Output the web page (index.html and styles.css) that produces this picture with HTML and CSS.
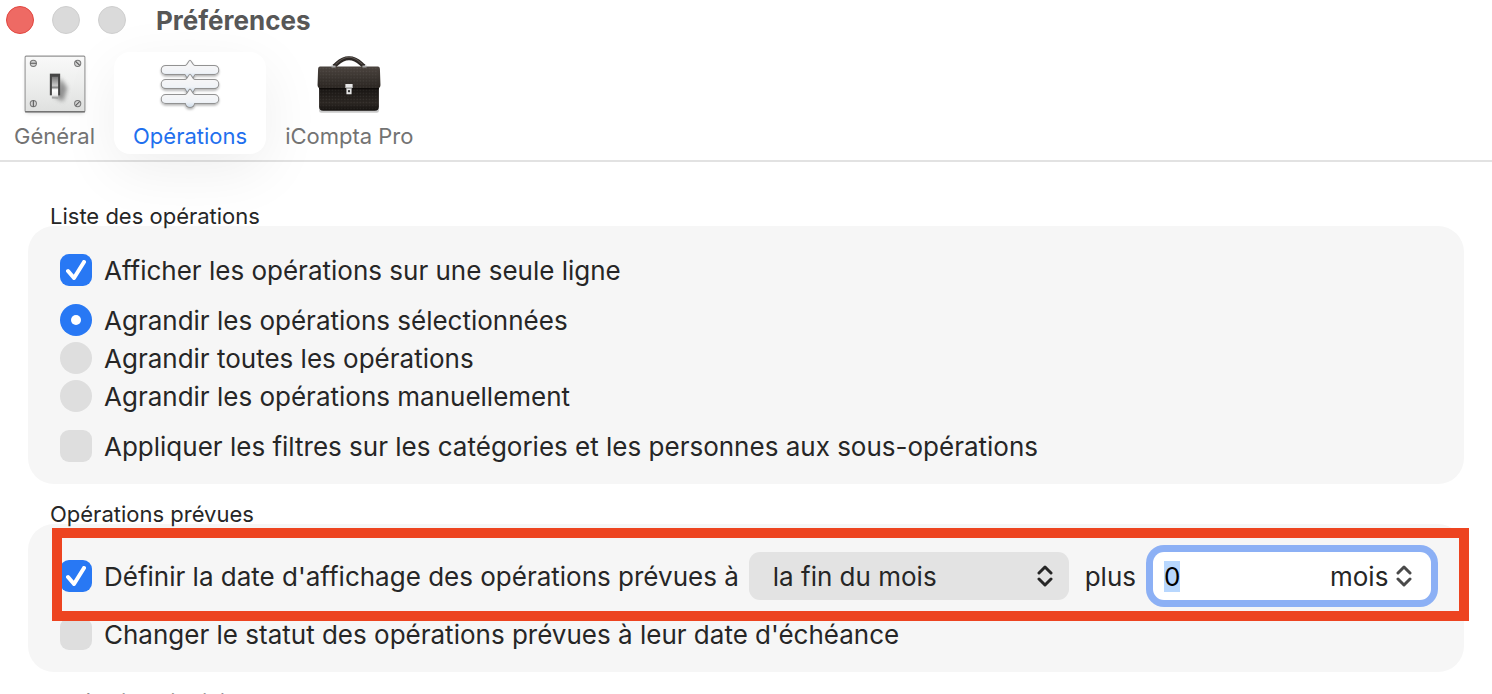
FILE: index.html
```html
<!DOCTYPE html>
<html lang="fr">
<head>
    <meta charset="UTF-8">
    <meta name="viewport" content="width=device-width, initial-scale=1.0">
    <title>Préférences</title>
    <link rel="stylesheet" href="styles.css">
</head>
<body>
    <header>
        <div class="titlebar">
            <button class="dot close" aria-label="Fermer"></button>
            <button class="dot" aria-label="Réduire" disabled></button>
            <button class="dot" aria-label="Agrandir" disabled></button>
            <h1>Préférences</h1>
        </div>
        <nav class="tabs">
            <button class="tab">
                <svg width="66" height="66" viewBox="0 0 64 64" aria-hidden="true">
                    <defs>
                        <linearGradient id="plate" x1="0" y1="0" x2="0" y2="1">
                            <stop offset="0" stop-color="#f9f9f9"/>
                            <stop offset="0.5" stop-color="#eeefee"/>
                            <stop offset="1" stop-color="#dfe0df"/>
                        </linearGradient>
                        <linearGradient id="lever" x1="0" y1="0" x2="0" y2="1">
                            <stop offset="0" stop-color="#777"/>
                            <stop offset="0.4" stop-color="#c8c8c8"/>
                            <stop offset="0.5" stop-color="#888"/>
                            <stop offset="0.6" stop-color="#fff"/>
                            <stop offset="0.85" stop-color="#eee"/>
                            <stop offset="1" stop-color="#888"/>
                        </linearGradient>
                        <filter id="soft" x="-50%" y="-50%" width="200%" height="200%">
                            <feGaussianBlur stdDeviation="2"/>
                        </filter>
                    </defs>
                    <rect x="4" y="8" width="56" height="51" fill="#999" opacity="0.5" filter="url(#soft)"/>
                    <rect x="3" y="4" width="58" height="54" rx="1" fill="url(#plate)" stroke="#929292"/>
                    <path d="M3 58h58" stroke="#747474" stroke-width="1.5"/>
                    <path d="M32 44l5-19 7 10-4 13z" fill="#555" opacity="0.6" filter="url(#soft)"/>
                    <rect x="27" y="21" width="10" height="21" fill="#454545"/>
                    <rect x="29" y="24" width="6" height="21" fill="url(#lever)"/>
                    <g fill="#d2d2d2" stroke="#777">
                        <circle cx="11" cy="11" r="3"/>
                        <circle cx="54" cy="11" r="3"/>
                        <circle cx="11" cy="50" r="3"/>
                        <circle cx="54" cy="50" r="3"/>
                    </g>
                    <path d="M8 11h6M52 9l4 4M11 47v6M52 52l4-4" stroke="#555" fill="none"/>
                </svg>
                Général
            </button>
            <button class="tab active">
                <svg width="66" height="66" viewBox="0 0 64 64" aria-hidden="true">
                    <defs>
                        <linearGradient id="bar" x1="0" y1="0" x2="0" y2="1">
                            <stop offset="0.3" stop-color="#f6f6f7"/>
                            <stop offset="0.7" stop-color="#f0f3f7"/>
                            <stop offset="1" stop-color="#ccdbea"/>
                        </linearGradient>
                        <filter id="drop" x="-10%" y="-20%" width="120%" height="160%">
                            <feDropShadow dx="0" dy="1.5" stdDeviation="1.2" flood-color="#000" flood-opacity="0.3"/>
                        </filter>
                    </defs>
                    <g fill="url(#bar)" stroke="#929292" filter="url(#drop)">
                        <path d="M8.500 13H27.500C29.500 13 30.500 8 32 8S34.500 13 36.500 13H55.500A4.400 4.400 0 0 1 55.500 21.800H37L35 25H29L27 21.800H8.500A4.400 4.400 0 0 1 8.500 13z"/>
                        <path d="M8.500 26.700H27.500C29.500 26.700 30.500 21.500 32 21.500S34.500 26.700 36.500 26.700H55.500A4.400 4.400 0 0 1 55.500 35.500H37L35 39H29L27 35.500H8.500A4.400 4.400 0 0 1 8.500 26.700z"/>
                        <path d="M8.500 41.200H27.500C29.500 41.200 30.500 36 32 36S34.500 41.200 36.500 41.200H55.500A4.400 4.400 0 0 1 55.500 50H36.500C35.500 55 28.500 55 27.500 50H8.500A4.400 4.400 0 0 1 8.500 41.200z"/>
                    </g>
                </svg>
                Opérations
            </button>
            <button class="tab">
                <svg width="66" height="66" viewBox="0 0 64 64" aria-hidden="true">
                    <defs>
                        <linearGradient id="flap" x1="0" y1="0" x2="0" y2="1">
                            <stop offset="0" stop-color="#4a433e"/>
                            <stop offset="1" stop-color="#2b2622"/>
                        </linearGradient>
                        <linearGradient id="bag" x1="0" y1="0" x2="0" y2="1">
                            <stop offset="0" stop-color="#14110f"/>
                            <stop offset="0.7" stop-color="#2b2622"/>
                            <stop offset="1" stop-color="#14110f"/>
                        </linearGradient>
                        <pattern id="grain" width="3" height="3" patternUnits="userSpaceOnUse">
                            <circle cx="1" cy="1" r="0.7" fill="#fff" opacity="0.07"/>
                        </pattern>
                    </defs>
                    <rect x="3" y="54" width="58" height="5" rx="2" fill="#777" opacity="0.4"/>
                    <path d="M17 14C21 12 23 6 32 6S43 12 47 14" fill="none" stroke="#2c2724" stroke-width="4"/>
                    <path d="M19 12C23 9 25 5 32 5S41 9 45 12" fill="none" stroke="#5d5651"/>
                    <path d="M3 32H61V53Q61 57 57 57H7Q3 57 3 53z" fill="url(#bag)"/>
                    <path d="M4 14H60Q62 14 62 17L62.500 32Q62.500 35 60 35H4Q1.500 35 1.500 32L2 17Q2 14 4 14z" fill="url(#flap)"/>
                    <path d="M4 15H60V56H4z" fill="url(#grain)"/>
                    <path d="M3 35.500H61" stroke="#0e0b09"/>
                    <path d="M15 13h4v2h-4zM45 13h4v2h-4z" fill="#aaa"/>
                    <path d="M28.500 31h7v4h-1v6h-5v-6h-1z" fill="#e6e6e6"/>
                    <path d="M29 35h6" stroke="#777"/>
                    <rect x="31" y="37" width="2" height="2" fill="#333"/>
                </svg>
                iCompta Pro
            </button>
        </nav>
    </header>

    <main>
        <section>
            <h2>Liste des opérations</h2>
            <div class="panel">
                <label class="row"><input type="checkbox" checked> Afficher les opérations sur une seule ligne</label>
                <div class="group">
                    <label class="row"><input type="radio" name="agrandir" checked> Agrandir les opérations sélectionnées</label>
                    <label class="row"><input type="radio" name="agrandir"> Agrandir toutes les opérations</label>
                    <label class="row"><input type="radio" name="agrandir"> Agrandir les opérations manuellement</label>
                </div>
                <label class="row"><input type="checkbox"> Appliquer les filtres sur les catégories et les personnes aux sous-opérations</label>
            </div>
        </section>

        <section>
            <h2>Opérations prévues</h2>
            <div class="panel">
                <div class="date-row">
                    <label class="row"><input type="checkbox" checked> Définir la date d'affichage des opérations prévues à</label>
                    <div class="popup">
                        <select aria-label="Date d'affichage">
                            <option>la fin du mois</option>
                        </select>
                        <svg class="chevrons" width="16" height="24" viewBox="0 0 16 24" aria-hidden="true"><path d="M2 9l6-6 6 6M2 15l6 6 6-6"/></svg>
                    </div>
                    <label for="delai">plus</label>
                    <div class="field">
                        <input type="text" id="delai" value="0" autofocus>
                        <div class="unit">
                            <select aria-label="Unité">
                                <option>mois</option>
                            </select>
                            <svg class="chevrons" width="16" height="24" viewBox="0 0 16 24" aria-hidden="true"><path d="M2 9l6-6 6 6M2 15l6 6 6-6"/></svg>
                        </div>
                    </div>
                    <div class="frame"></div>
                </div>
                <label class="row"><input type="checkbox"> Changer le statut des opérations prévues à leur date d'échéance</label>
            </div>
        </section>

        <section>
            <h2>Opérations individuelles</h2>
        </section>
    </main>

    <script>
        document.getElementById('delai').select();
    </script>
</body>
</html>
```
FILE: styles.css
```css
* {
    box-sizing: border-box;
}
body {
    margin: 0;
    height: 100vh;
    overflow: hidden;
    background: #fff;
    color: #262626;
    font-family: Inter, "Liberation Sans", sans-serif;
    font-size: 26px;
}
button, input, select {
    font: inherit;
    color: inherit;
    margin: 0;
    padding: 0;
    border: 0;
    background: none;
}

/* Toolbar */
header {
    border-bottom: 2px solid #e2e2e2;
    padding-bottom: 6px;
}
.titlebar {
    display: flex;
    align-items: center;
    gap: 18px;
    height: 40px;
    padding-left: 6px;
}
.dot {
    width: 28px;
    height: 28px;
    border-radius: 50%;
    background: #dadada;
    border: 1px solid #cfcfcf;
}
.dot.close {
    background: #ee6a64;
    border-color: #e2463f;
}
h1 {
    margin: 0 0 0 12px;
    font-size: 26px;
    font-weight: 700;
    color: #575757;
}
.tabs {
    display: flex;
    margin: 12px 0 0 -5px;
}
.tab {
    display: flex;
    flex-direction: column;
    align-items: center;
    height: 102px;
    padding: 0 19px;
    border-radius: 16px;
    font-size: 22px;
    line-height: 36px;
    color: #737373;
}
.tab.active {
    color: #1f70ee;
    background: #fff;
    box-shadow: 0 16px 60px rgba(0, 0, 0, 0.07);
}

/* Content */
main {
    padding: 44px 28px 0;
}
section {
    margin-bottom: 20px;
}
h2 {
    margin: 0 0 0 22px;
    font-size: 22px;
    font-weight: 400;
    line-height: 20px;
}
.panel {
    display: flex;
    flex-direction: column;
    gap: 12px;
    padding: 25px 26px 19px 32px;
    border-radius: 26px;
    background: #f6f6f6;
}
.row {
    display: flex;
    align-items: center;
    gap: 12px;
    height: 38px;
    white-space: nowrap;
}
input[type="checkbox"], input[type="radio"] {
    appearance: none;
    display: grid;
    place-items: center;
    flex: none;
    width: 32px;
    height: 32px;
    border-radius: 9px;
    background: #dedede;
}
input[type="radio"] {
    border-radius: 50%;
}
input[type="checkbox"]:checked, input[type="radio"]:checked {
    background: #2878f4;
}
input[type="checkbox"]:checked::before {
    content: "";
    width: 20px;
    height: 20px;
    background: url("data:image/svg+xml,%3Csvg xmlns='http://www.w3.org/2000/svg' viewBox='0 0 20 20'%3E%3Cpath d='M2 11l6 7L18 2' fill='none' stroke='white' stroke-width='4' stroke-linecap='round' stroke-linejoin='round'/%3E%3C/svg%3E");
}
input[type="radio"]:checked::before {
    content: "";
    width: 10px;
    height: 10px;
    border-radius: 50%;
    background: #fff;
}

/* Date row */
.date-row {
    position: relative;
    display: flex;
    align-items: center;
    gap: 10px;
    height: 54px;
}
.popup {
    position: relative;
    flex: 1;
    margin-right: 6px;
}
.popup select {
    appearance: none;
    width: 100%;
    height: 48px;
    padding-left: 24px;
    border-radius: 11px;
    background: #e3e3e3;
}
.chevrons {
    position: absolute;
    top: 50%;
    right: 16px;
    transform: translateY(-50%);
    fill: none;
    stroke: #262626;
    stroke-width: 3;
    stroke-linecap: round;
    stroke-linejoin: round;
    pointer-events: none;
}
.field {
    display: flex;
    align-items: center;
    width: 278px;
    height: 48px;
    margin: 0 7px;
    padding: 0 19px 0 11px;
    border-radius: 11px;
    background: #fff;
    box-shadow: 0 0 0 7px #8cb0f5;
}
.field input {
    flex: 1;
    min-width: 0;
    height: 34px;
    color: #000;
    outline: none;
}
.field input::selection {
    color: #000;
    background: #b8d7fe;
}
.unit {
    position: relative;
}
.unit select {
    appearance: none;
    padding-right: 23px;
}
.unit .chevrons {
    right: 0;
    stroke: #4a4a4a;
}
.frame {
    position: absolute;
    z-index: 1;
    top: -21px;
    right: -31px;
    bottom: -18px;
    left: -8px;
    border: 10px solid #ed4420;
    pointer-events: none;
}
```
